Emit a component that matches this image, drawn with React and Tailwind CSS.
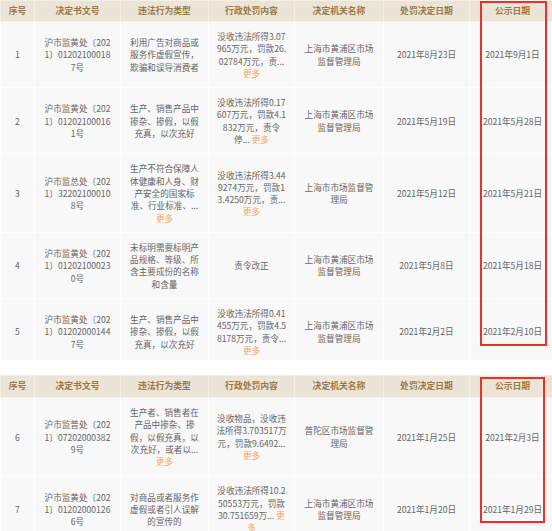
import React from "react";

const COLS = [34, 86, 88, 86, 89, 86, 86];
const HEADERS = ["序号", "决定书文号", "违法行为类型", "行政处罚内容", "决定机关名称", "处罚决定日期", "公示日期"];

const HP = ["上海市黄浦区市场", "监督管理局"];

const TOP = [
  {
    no: "1",
    doc: ["沪市监黄处〔202", "1〕01202100018", "7号"],
    type: ["利用广告对商品或", "服务作虚假宣传，", "欺骗和误导消费者"],
    content: ["没收违法所得3.07", "965万元，罚款26.", "02784万元，责..."],
    more: "line",
    org: HP,
    date: "2021年8月23日",
    pub: "2021年9月1日",
  },
  {
    no: "2",
    doc: ["沪市监黄处〔202", "1〕01202100016", "1号"],
    type: ["生产、销售产品中", "掺杂、掺假，以假", "充真，以次充好"],
    content: ["没收违法所得0.17", "607万元，罚款4.1", "832万元，责令", "停..."],
    more: "inline",
    org: HP,
    date: "2021年5月19日",
    pub: "2021年5月28日",
  },
  {
    no: "3",
    doc: ["沪市监总处〔202", "1〕32202100010", "8号"],
    type: ["生产不符合保障人", "体健康和人身、财", "产安全的国家标", "准、行业标准、..."],
    typeMore: true,
    content: ["没收违法所得3.44", "9274万元，罚款1", "3.4250万元，责..."],
    more: "line",
    org: ["上海市市场监督管", "理局"],
    date: "2021年5月12日",
    pub: "2021年5月21日",
  },
  {
    no: "4",
    doc: ["沪市监黄处〔202", "1〕01202100023", "0号"],
    type: ["未标明需要标明产", "品规格、等级、所", "含主要成份的名称", "和含量"],
    content: ["责令改正"],
    org: HP,
    date: "2021年5月8日",
    pub: "2021年5月18日",
  },
  {
    no: "5",
    doc: ["沪市监黄处〔202", "1〕01202000144", "7号"],
    type: ["生产、销售产品中", "掺杂、掺假，以假", "充真，以次充好"],
    content: ["没收违法所得0.41", "455万元，罚款4.5", "8178万元，责令..."],
    more: "line",
    org: HP,
    date: "2021年2月2日",
    pub: "2021年2月10日",
  },
];

const BOTTOM = [
  {
    no: "6",
    doc: ["沪市监普处〔202", "1〕07202000382", "9号"],
    type: ["生产者、销售者在", "产品中掺杂、掺", "假，以假充真，以", "次充好，或者以..."],
    typeMore: true,
    content: ["没收物品，没收违", "法所得3.703517万", "元，罚款9.6492..."],
    more: "line",
    org: ["普陀区市场监督管", "理局"],
    date: "2021年1月25日",
    pub: "2021年2月3日",
  },
  {
    no: "7",
    doc: ["沪市监黄处〔202", "1〕01202000126", "6号"],
    type: ["对商品或者服务作", "虚假或者引人误解", "的宣传的"],
    content: ["没收违法所得10.2", "50553万元，罚款", "30.751659万..."],
    more: "split",
    org: HP,
    date: "2021年1月20日",
    pub: "2021年1月29日",
  },
];

const More = ({ children = "更多" }) => <span className="text-[#f7a35c]">{children}</span>;

function Lines({ lines, more }) {
  return (
    <div>
      {lines.map((l, i) => {
        const last = i === lines.length - 1;
        return (
          <div key={i} className="whitespace-nowrap">
            {l}
            {last && more === "inline" && <> <More /></>}
            {last && more === "split" && <> <More>更</More></>}
          </div>
        );
      })}
      {more === "line" && <div><More /></div>}
      {more === "split" && <div><More>多</More></div>}
    </div>
  );
}

function Table({ rows, headH }) {
  const td = "border border-[#fdfdfd] bg-[#f8f8f8] px-1 py-[8px] text-center align-middle";
  return (
    <table className="table-fixed border-collapse w-[555px] text-[8.6px] leading-[12.3px] text-[#666]">
      <colgroup>
        {COLS.map((w, i) => (
          <col key={i} style={{ width: w }} />
        ))}
      </colgroup>
      <thead>
        <tr className={headH}>
          {HEADERS.map((h) => (
            <th key={h} className="border border-[#f4efe7] bg-[#ece4d7] p-0 text-center align-middle font-bold text-[8.8px] text-[#9a7945]">
              {h}
            </th>
          ))}
        </tr>
      </thead>
      <tbody>
        {rows.map((r) => (
          <tr key={r.no}>
            <td className={td}>{r.no}</td>
            <td className={td}><Lines lines={r.doc} /></td>
            <td className={td}><Lines lines={r.type} more={r.typeMore ? "line" : undefined} /></td>
            <td className={td}><Lines lines={r.content} more={r.more} /></td>
            <td className={td}><Lines lines={r.org} /></td>
            <td className={td}>{r.date}</td>
            <td className={td}>{r.pub}</td>
          </tr>
        ))}
      </tbody>
    </table>
  );
}

export default function App() {
  return (
    <div className="w-[552px] h-[531px] overflow-hidden bg-white font-['Noto_Sans_CJK_SC','Noto_Sans',sans-serif]">
      <div className="relative h-[360px] overflow-hidden">
        <Table rows={TOP} headH="h-[21px]" />
        <div className="absolute left-[480px] top-[1px] w-[67px] h-[345px] border-2 border-[#e5322d]" />
      </div>
      <div className="relative mt-[15px] h-[156px] overflow-hidden">
        <Table rows={BOTTOM} headH="h-[22px]" />
        <div className="absolute left-[480px] top-[2px] w-[65px] h-[146px] border-2 border-[#e5322d]" />
      </div>
    </div>
  );
}
